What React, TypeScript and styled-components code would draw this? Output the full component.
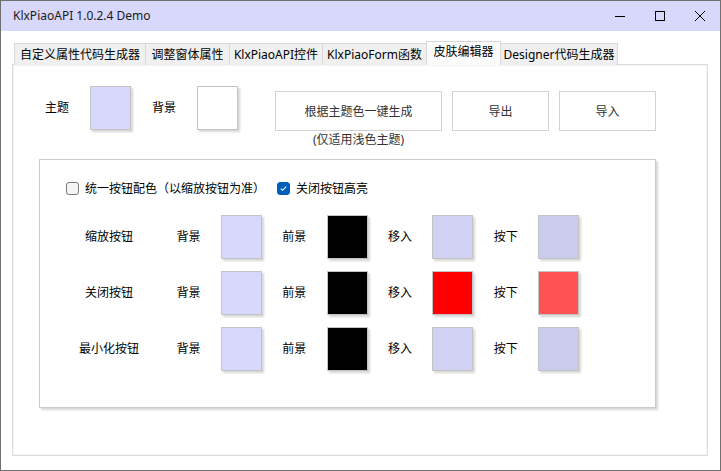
import styled, { createGlobalStyle } from "styled-components"

const GlobalStyle = createGlobalStyle`
  body {
    margin: 0;
    font-family: "Noto Sans", "Noto Sans CJK SC", sans-serif;
  }
`

const tabs = [
  { title: '自定义属性代码生成器', w: 132 },
  { title: '调整窗体属性', w: 85 },
  { title: 'KlxPiaoAPI控件', w: 94 },
  { title: 'KlxPiaoForm函数', w: 105 },
  { title: '皮肤编辑器', w: 75, active: true },
  { title: 'Designer代码生成器', w: 118 },
]

const buttonRows = [
  { name: '缩放按钮', bg: '#d8d8fc', fg: '#000000', hover: '#d1d1f4', down: '#cbcbee' },
  { name: '关闭按钮', bg: '#d8d8fc', fg: '#000000', hover: '#ff0000', down: '#ff5252' },
  { name: '最小化按钮', bg: '#d8d8fc', fg: '#000000', hover: '#d1d1f4', down: '#cbcbee' },
]

const App = () => {
  return (
    <>
      <GlobalStyle />
      <Window>
        <TitleBar>
          <Caption>KlxPiaoAPI 1.0.2.4 Demo</Caption>
          <Controls>
            <ControlButton>
              <svg width="10" height="10" viewBox="0 0 10 10">
                <line x1="0" y1="5.5" x2="10" y2="5.5" stroke="#000" strokeWidth="1" />
              </svg>
            </ControlButton>
            <ControlButton>
              <svg width="10" height="10" viewBox="0 0 10 10">
                <rect x="0.5" y="0.5" width="9" height="9" fill="none" stroke="#000" strokeWidth="1" />
              </svg>
            </ControlButton>
            <ControlButton>
              <svg width="10" height="10" viewBox="0 0 10 10">
                <path d="M0 0 L10 10 M10 0 L0 10" stroke="#000" strokeWidth="1" />
              </svg>
            </ControlButton>
          </Controls>
        </TitleBar>
        <Body>
          <TabStrip>
            {tabs.map((tab, index) => (
              <Tab key={index} $w={tab.w} $active={!!tab.active}>{tab.title}</Tab>
            ))}
          </TabStrip>
          <TabPage>
            <TopRow>
              <Label>主题</Label>
              <Swatch $c="#d8d8fc" />
              <Label>背景</Label>
              <Swatch $c="#ffffff" />
              <Actions>
                <ActionColumn>
                  <ActionButton $w={167}>根据主题色一键生成</ActionButton>
                  <Note>(仅适用浅色主题)</Note>
                </ActionColumn>
                <ActionButton $w={97}>导出</ActionButton>
                <ActionButton $w={97}>导入</ActionButton>
              </Actions>
            </TopRow>
            <Panel>
              <CheckRow>
                <CheckItem>
                  <CheckBox $checked={false} />
                  <span>统一按钮配色（以缩放按钮为准）</span>
                </CheckItem>
                <CheckItem>
                  <CheckBox $checked={true}>
                    <svg width="9" height="9" viewBox="0 0 9 9">
                      <path d="M1.8 4.6 L3.6 6.3 L7.2 2.7" fill="none" stroke="#fff" strokeWidth="1.1" />
                    </svg>
                  </CheckBox>
                  <span>关闭按钮高亮</span>
                </CheckItem>
              </CheckRow>
              <Rows>
                {buttonRows.map((row, index) => (
                  <Row key={index}>
                    <RowLabel>{row.name}</RowLabel>
                    <Label>背景</Label>
                    <Swatch $c={row.bg} />
                    <Label>前景</Label>
                    <Swatch $c={row.fg} />
                    <Label>移入</Label>
                    <Swatch $c={row.hover} />
                    <Label>按下</Label>
                    <Swatch $c={row.down} />
                  </Row>
                ))}
              </Rows>
            </Panel>
          </TabPage>
        </Body>
      </Window>
    </>
  )
}

const Window = styled.div`
  width: 721px;
  height: 471px;
  box-sizing: border-box;
  border: 1px solid #6f6f6f;
  background: #ffffff;
  display: flex;
  flex-direction: column;
  font-size: 12px;
  color: #000;
`

const TitleBar = styled.div`
  height: 30px;
  background: #d8d8fc;
  display: flex;
  align-items: center;
  padding-left: 12px;
`

const Caption = styled.div`
  flex: 1;
  font-size: 12px;
  line-height: 16px;
  color: #1a1a1a;
`

const Controls = styled.div`
  display: flex;
  height: 100%;
`

const ControlButton = styled.div`
  width: 40px;
  height: 100%;
  display: flex;
  align-items: center;
  justify-content: center;
`

const Body = styled.div`
  padding: 10px 12px 0 11px;
`

const TabStrip = styled.div`
  display: flex;
  align-items: flex-end;
  height: 24px;
  margin-bottom: -1px;
  padding-left: 2px;
`

const Tab = styled.div<{ $w: number; $active: boolean }>`
  width: ${p => p.$w}px;
  height: ${p => (p.$active ? 24 : 22)}px;
  flex: none;
  box-sizing: border-box;
  border: 1px solid #d9d9d9;
  border-bottom: none;
  & + & {
    margin-left: -1px;
  }
  background: ${p => (p.$active ? '#fbfbfb' : '#f0f0f0')};
  display: flex;
  align-items: center;
  justify-content: center;
  padding-bottom: ${p => (p.$active ? 3 : 0)}px;
  font-size: 12px;
  line-height: 16px;
  color: #000;
  white-space: nowrap;
  position: ${p => (p.$active ? 'relative' : 'static')};
  z-index: ${p => (p.$active ? 1 : 0)};
`

const TabPage = styled.div`
  height: 392px;
  box-sizing: border-box;
  border: 1px solid #dcdcdc;
  box-shadow: inset 0 0 0 1px #f4f4f4;
  background: #ffffff;
  padding: 21px 0 0 26px;
`

const TopRow = styled.div`
  display: flex;
  align-items: flex-start;
  gap: 21px;
  padding-left: 6px;
`

const Label = styled.div`
  width: 24px;
  font-size: 12px;
  line-height: 16px;
  color: #000;
  white-space: nowrap;
  ${TopRow} > & {
    margin-top: 14px;
  }
`

const Swatch = styled.div<{ $c: string }>`
  width: 41px;
  height: 44px;
  flex: none;
  box-sizing: border-box;
  background: ${p => p.$c};
  border: 1px solid #c4c4c4;
  box-shadow: 2px 2px 2px rgba(0, 0, 0, 0.16);
`

const Actions = styled.div`
  display: flex;
  align-items: flex-start;
  gap: 10px;
  margin-left: 16px;
`

const ActionColumn = styled.div`
  display: flex;
  flex-direction: column;
  align-items: center;
`

const ActionButton = styled.div<{ $w: number }>`
  width: ${p => p.$w}px;
  height: 40px;
  box-sizing: border-box;
  margin-top: 5px;
  border: 1px solid #d3d3d3;
  background: #ffffff;
  display: flex;
  align-items: center;
  justify-content: center;
  font-size: 12px;
  color: #333;
`

const Note = styled.div`
  margin-top: 1px;
  font-size: 12px;
  line-height: 16px;
  color: #333;
`

const Panel = styled.div`
  width: 617px;
  height: 249px;
  box-sizing: border-box;
  margin-top: 11px;
  border: 1px solid #cbcbcb;
  box-shadow: 2px 2px 2px rgba(0, 0, 0, 0.16);
  padding: 22px 0 0 26px;
`

const CheckRow = styled.div`
  display: flex;
  align-items: center;
  gap: 12px;
  height: 13px;
`

const CheckItem = styled.div`
  display: flex;
  align-items: center;
  gap: 6px;
  font-size: 12px;
  line-height: 16px;
  color: #000;
`

const CheckBox = styled.div<{ $checked: boolean }>`
  width: 13px;
  height: 13px;
  box-sizing: border-box;
  border-radius: 3px;
  border: 1px solid ${p => (p.$checked ? '#005fb8' : '#7a7a7a')};
  background: ${p => (p.$checked ? '#005fb8' : '#f5f5f5')};
  display: flex;
  align-items: center;
  justify-content: center;
`

const Rows = styled.div`
  display: flex;
  flex-direction: column;
  gap: 11px;
  margin-top: 19px;
`

const Row = styled.div`
  display: flex;
  align-items: center;
  gap: 20.4px;
  height: 45px;
`

const RowLabel = styled.div`
  width: 90px;
  box-sizing: border-box;
  padding-right: 4px;
  text-align: center;
  font-size: 12px;
  line-height: 16px;
  color: #000;
`

export default App
